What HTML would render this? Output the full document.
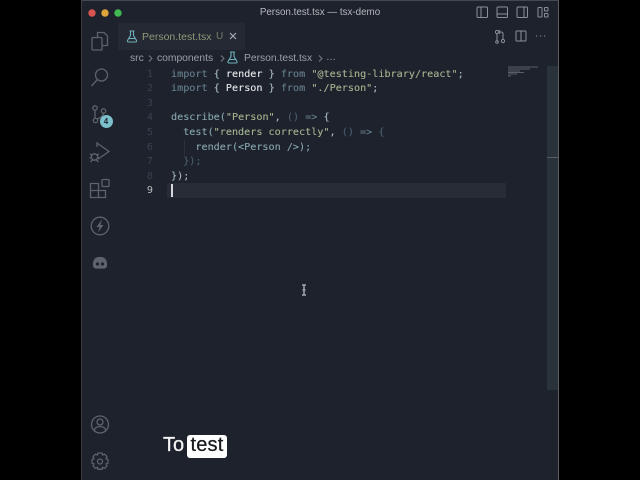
<!DOCTYPE html>
<html><head><meta charset="utf-8"><style>
html,body{margin:0;padding:0;background:#000;width:640px;height:480px;overflow:hidden}
#all{position:absolute;left:0;top:0;width:640px;height:480px;filter:blur(.35px)}
#w{position:absolute;left:81px;top:0;width:478px;height:480px;background:#1e222c;overflow:hidden;border-left:1px solid #3a3d44;border-right:1px solid #5a5d63;border-top:1px solid #45484e;box-sizing:border-box}
.t{position:absolute;font-family:"Liberation Sans",sans-serif;white-space:nowrap}
.c{position:absolute;left:171px;font:10.13px/14.6px "DejaVu Sans Mono",monospace;white-space:pre;color:#86a5ae;-webkit-text-stroke:.12px currentColor}
.n{position:absolute;width:22px;left:131px;text-align:right;font:10.13px/14.6px "DejaVu Sans Mono",monospace;color:#39424e}
.k{color:#667f8d}.w{color:#e4e7ea}.s{color:#a3b590}.p{color:#a6bac2}.d{color:#4a5e6f}
svg{position:absolute;left:0;top:0}
</style></head><body><div id="all">
<div id="w"></div>
<div style="position:absolute;left:118px;top:23px;width:127px;height:27px;background:#242933"></div>
<div style="position:absolute;left:167px;top:183px;width:339px;height:15px;background:#282c36"></div>
<div style="position:absolute;left:547px;top:66px;width:11px;height:324px;background:#29323b"></div>
<div style="position:absolute;left:547px;top:157px;width:11px;height:1px;background:#565d63"></div>
<div style="position:absolute;left:171px;top:184px;width:1.5px;height:13px;background:#d5d8dc"></div>
<div style="position:absolute;left:184px;top:140px;width:1px;height:15px;background:#2c323c"></div>

<div class="t" style="width:640px;text-align:center;top:6px;font-size:9.8px;line-height:13px;color:#b4b8bc;left:0">Person.test.tsx — tsx-demo</div>
<div class="t" style="left:142px;top:30px;font-size:10.5px;line-height:14px;color:#8b9a76">Person.test.tsx</div>
<div class="t" style="left:216px;top:30px;font-size:10px;line-height:14px;color:#74806a">U</div>
<div class="t" style="left:130px;top:52px;font-size:10.3px;line-height:14px;color:#99a0a8">src</div>
<div class="t" style="left:157px;top:52px;font-size:10.3px;line-height:14px;color:#99a0a8">components</div>
<div class="t" style="left:244px;top:52px;font-size:10.3px;line-height:14px;color:#99a0a8">Person.test.tsx</div>
<div class="t" style="left:326px;top:51px;font-size:10px;line-height:14px;color:#99a0a8">…</div>

<div class="n" style="top:67.5px">1</div><div class="n" style="top:82px">2</div><div class="n" style="top:96.5px">3</div><div class="n" style="top:111px">4</div><div class="n" style="top:126px">5</div><div class="n" style="top:140.5px">6</div><div class="n" style="top:155px">7</div><div class="n" style="top:169.5px">8</div><div class="n" style="top:184px;color:#b8bcc0">9</div>

<div class="c" style="top:67.5px"><span class="k">import</span> <span class="p">{</span> <span class="w">render</span> <span class="p">}</span> <span class="k">from</span> <span class="s">"@testing-library/react"</span><span class="p">;</span></div>
<div class="c" style="top:82px"><span class="k">import</span> <span class="p">{</span> <span class="w">Person</span> <span class="p">}</span> <span class="k">from</span> <span class="s">"./Person"</span><span class="p">;</span></div>
<div class="c" style="top:111px">describe(<span class="s">"Person"</span><span class="p">,</span> <span class="d">()</span> <span class="k">=&gt;</span> <span class="p">{</span></div>
<div class="c" style="top:126px">  test(<span class="s">"renders correctly"</span><span class="p">,</span> <span class="d">()</span> <span class="k">=&gt;</span> <span class="d">{</span></div>
<div class="c" style="top:140.5px">    render(&lt;Person /&gt;);</div>
<div class="c" style="top:155px">  <span class="d">});</span></div>
<div class="c" style="top:169.5px"><span class="p">});</span></div>

<svg width="640" height="480" fill="none" stroke="#646a73" stroke-width="1.2">
<circle cx="92" cy="13" r="3.7" fill="#d9534f" stroke="none"/><circle cx="105" cy="13" r="3.7" fill="#dfa53a" stroke="none"/><circle cx="118" cy="13" r="3.7" fill="#3fb950" stroke="none"/>
<g stroke="#8b9097" stroke-width="1"><rect x="477" y="7" width="10.500" height="10.500" rx="1"/><path d="M481 7v10.500"/><rect x="497" y="7" width="10.500" height="10.500" rx="1"/><path d="M497 14h10.500"/><rect x="517" y="7" width="10.500" height="10.500" rx="1"/><path d="M524 7v10.500"/><rect x="538" y="7.500" width="4" height="9.500" rx=".8"/><rect x="544.500" y="7.500" width="3.500" height="3.500" rx=".8"/><rect x="544.500" y="13.500" width="3.500" height="3.500" rx=".8"/></g>
<g stroke="#8b9097" stroke-width="1"><circle cx="497" cy="32" r="1.600"/><circle cx="503" cy="41" r="1.600"/><path d="M497 34v6.500M503 39v-5q0-2-2-2h-2M500 30l-1.500 2 1.500 2"/><circle cx="497" cy="42" r="1.300"/><rect x="516" y="31" width="10" height="10" rx="1"/><path d="M521 31v10"/><path d="M536 36h1.200M540 36h1.200M544 36h1.200"/></g>
<path d="M230 33l6 6M236 33l-6 6" stroke="#a9adb2"/>
<g stroke="#6fb0bb" stroke-width="1.100"><path d="M129.500 31h5M130.500 31v4.500l-3 5q-.5 1.500 1 1.500h7q1.500 0 1-1.500l-3-5v-4.500"/><path d="M129 38.500h6"/></g>
<g stroke="#6fb0bb" stroke-width="1.100"><path d="M230 52h5M231 52v4.500l-3 5q-.5 1.500 1 1.500h7q1.500 0 1-1.500l-3-5v-4.500"/><path d="M229.500 59.500h6"/></g>
<path d="M149 55.500l3 3-3 3M221 55.500l3 3-3 3M319 55.500l3 3-3 3" stroke="#7d838a" stroke-width=".9"/>
<g stroke="#5d636c" stroke-width="1.300">
<path d="M97.500 37v-4.500h6.500l3.500 3.500v9.500h-5.500"/><rect x="92" y="37.500" width="10" height="12.500" rx="1"/>
<circle cx="101.500" cy="75" r="6"/><path d="M97 80l-5.500 6"/>
<circle cx="95" cy="108" r="2.200"/><circle cx="95.500" cy="120.500" r="2.200"/><circle cx="103.500" cy="111" r="2.200"/><path d="M95 110v8.500M103.500 113q0 4-6.500 6"/>
<path d="M97 147v-4l12 8.500-11 7.500"/><circle cx="94.500" cy="157" r="3.200"/><path d="M90 154l2 1M89.500 158h2M90.500 162l2-2M99 154l-2 1M99.500 158h-2M98.500 162l-2-2"/>
<path d="M90.500 183.500h8v14h-8zM90.500 190.500h15v7h-7"/><rect x="102" y="179.500" width="7" height="7" rx=".8"/>
<circle cx="100" cy="226" r="8.800"/><path d="M102 219.500l-5.500 7.500h3l-1.500 5.500 5.500-7.500h-3z" fill="#5d636c" stroke="none"/>
<path d="M93.500 265q0-7.500 6.500-7.500t6.500 7.500q0 3-3 3h-7q-3 0-3-3z" fill="#5d636c"/>
<circle cx="97.500" cy="264" r="1.600" fill="#1e222c" stroke="none"/><circle cx="102.500" cy="264" r="1.600" fill="#1e222c" stroke="none"/>
<circle cx="100" cy="424.500" r="8.500"/><circle cx="100" cy="422" r="3"/><path d="M94 431q1-4.500 6-4.500t6 4.500"/>
<circle cx="100" cy="461.500" r="2.500"/><path d="M98 453h4l.5 2 2-.8 2.500 2.500-1 2 2 .8v3.500l-2 .8 1 2-2.500 2.500-2-1-.5 2h-4l-.5-2-2 1-2.500-2.500 1-2-2-.8v-3.500l2-.8-1-2 2.500-2.500 2 .8z"/>
</g>
<g stroke="#6d747c" stroke-width=".8"><path d="M508 67h30M508 69h22M508 71h12M508 72.500h16M508 74h9M508 76h3"/></g>
<path d="M302 285h4M302 295h4M304 285.500v9M302.500 290h3" stroke="#a0a4aa" stroke-width="1.500"/>
</svg>
<div class="t" style="left:99.500px;top:114.500px;width:13px;height:13px;border-radius:50%;background:#7cc0cb;color:#1e222c;font-size:8px;line-height:13px;text-align:center;font-weight:bold">4</div>
<div class="t" style="left:163px;top:434px;font-size:20px;line-height:23px;color:#f2f2f2;-webkit-text-stroke:.3px #f2f2f2">To</div>
<div class="t" style="left:187px;top:435px;width:40px;height:23px;background:#fff;border-radius:3px;color:#16181c;font-size:20px;line-height:21px;text-align:center;letter-spacing:.2px;-webkit-text-stroke:.25px #16181c">test</div>
</div></body></html>
